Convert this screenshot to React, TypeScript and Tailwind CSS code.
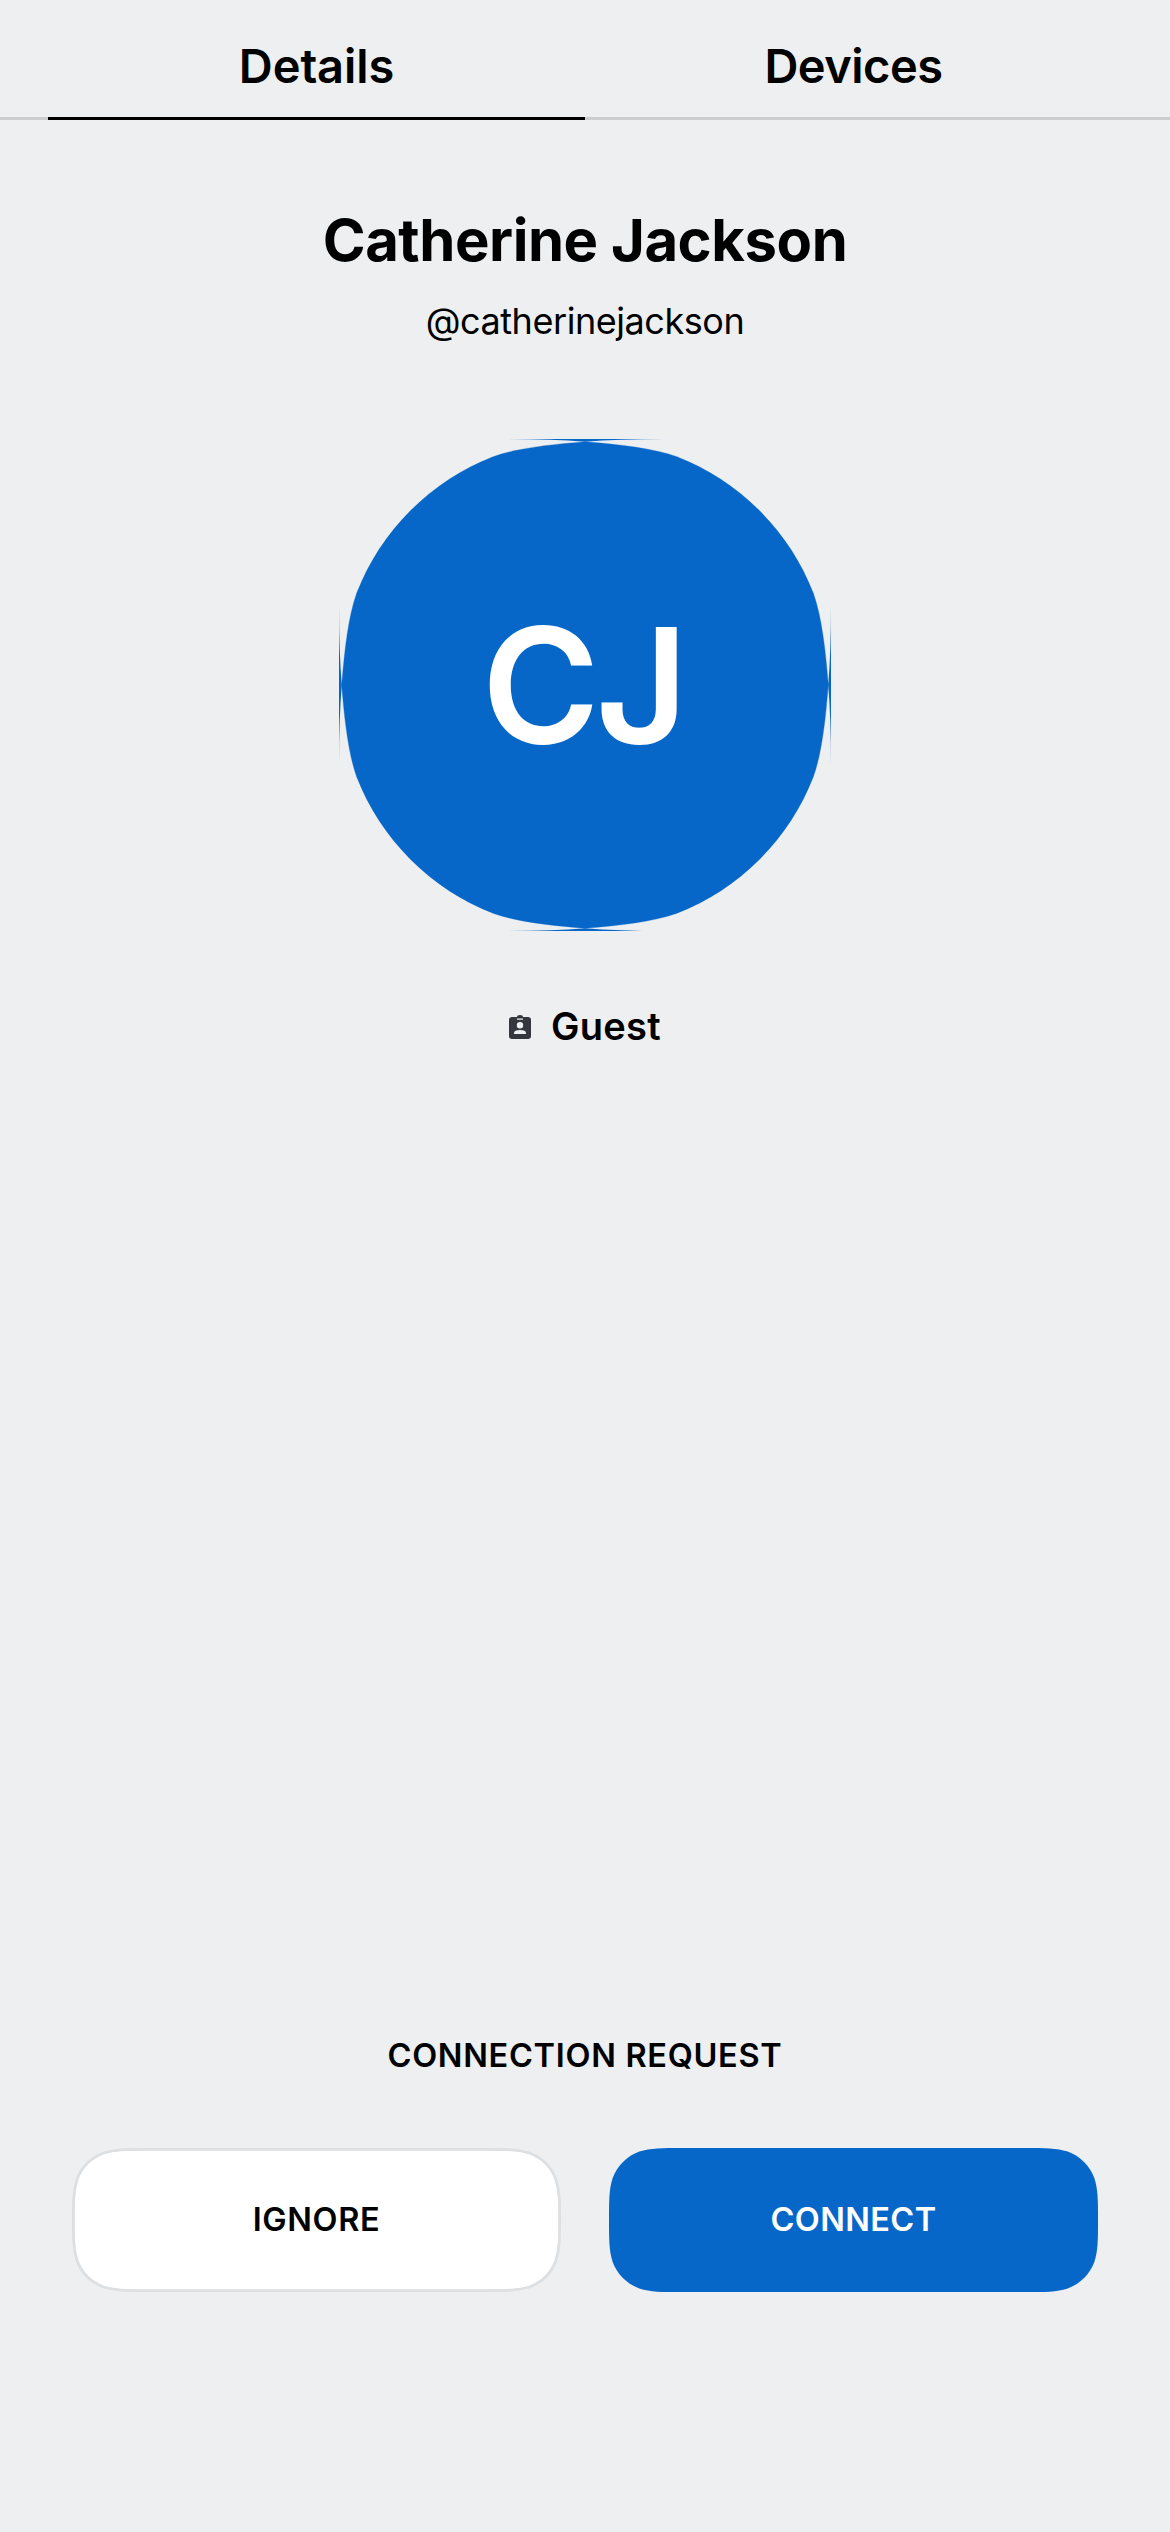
import React from "react";

const BLUE = "#0667C8";

const squircle = (w: number, h: number, r: number, i = 0) => {
  const a = r * 1.528665, b = r * 1.08849296, c = r * 0.86840694, d = r * 0.63149379;
  const e = r * 0.37282383, f = r * 0.16905956, g = r * 0.07491139;
  const k = Math.min(1, (h / 2 - i) / a);
  const a2 = a * k, b2 = Math.min(b, a2), c2 = Math.min(c, a2);
  const L = i, T = i, R = w - i, B = h - i;
  return `M${L + a} ${T}H${R - a}C${R - b} ${T} ${R - c} ${T} ${R - d} ${T + g}C${R - e} ${T + f} ${R - f} ${T + e} ${R - g} ${T + d}C${R} ${T + c2} ${R} ${T + b2} ${R} ${T + a2}V${B - a2}C${R} ${B - b2} ${R} ${B - c2} ${R - g} ${B - d}C${R - f} ${B - e} ${R - e} ${B - f} ${R - d} ${B - g}C${R - c} ${B} ${R - b} ${B} ${R - a} ${B}H${L + a}C${L + b} ${B} ${L + c} ${B} ${L + d} ${B - g}C${L + e} ${B - f} ${L + f} ${B - e} ${L + g} ${B - d}C${L} ${B - c2} ${L} ${B - b2} ${L} ${B - a2}V${T + a2}C${L} ${T + b2} ${L} ${T + c2} ${L + g} ${T + d}C${L + f} ${T + e} ${L + e} ${T + f} ${L + d} ${T + g}C${L + c} ${T} ${L + b} ${T} ${L + a} ${T}Z`;
};

function Tab({ label, active }: { label: string; active?: boolean }) {
  return (
    <button
      className={
        active
          ? "h-[120px] w-[537px] border-b-[3px] border-black pt-[13px] text-[47px] leading-[1] font-semibold tracking-[-0.1px]"
          : "h-[120px] w-[537px] border-b-[3px] border-[#cbcdce] pt-[13px] text-[47px] leading-[1] font-semibold tracking-[-0.5px]"
      }
    >
      {label}
    </button>
  );
}

function Avatar() {
  const quarter =
    "M0 -243.3C-35 -240.5 -68 -236.8 -92 -228.3A240 240 0 0 0 -228.3 -92C-236.8 -68 -240.5 -35 -243.3 0L0 0Z";
  const sliver = "M-80 -246H80Q33 -246 0 -243.2Q-33 -246 -80 -246Z";
  return (
    <div className="relative mt-[96px] grid size-[492px] place-items-center">
      <svg className="absolute inset-0" width="492" height="492" viewBox="-246 -246 492 492" fill={BLUE}>
        {[0, 90, 180, 270].map((r) => (
          <g key={r} transform={`rotate(${r})`}>
            <path d={quarter} stroke={BLUE} strokeWidth="0.3" />
            <path d={sliver} />
          </g>
        ))}
      </svg>
      <span className="relative mr-[4px] text-[160px] leading-none font-semibold tracking-[-4px] text-white">
        CJ
      </span>
    </div>
  );
}

function ActionButton({ label, primary }: { label: string; primary?: boolean }) {
  return (
    <button className="relative grid h-[144px] w-[489px] place-items-center">
      <svg className="absolute inset-0" width="489" height="144" viewBox="0 0 489 144">
        {primary ? (
          <path d={squircle(489, 144, 48)} fill={BLUE} />
        ) : (
          <path d={squircle(489, 144, 48, 1.4)} fill="white" stroke="#DCE0E3" strokeWidth="2.8" />
        )}
      </svg>
      <span
        className={
          primary
            ? "relative text-[32.5px] leading-none font-semibold tracking-[0.4px] text-white"
            : "relative text-[32.5px] leading-none font-semibold tracking-[0.6px] text-black"
        }
      >
        {label}
      </span>
    </button>
  );
}

export default function App() {
  return (
    <main className="flex h-[2532px] w-[1170px] flex-col items-center overflow-hidden bg-[#edeff1] font-['Inter',sans-serif] text-black">
      <nav className="flex h-[120px] w-full">
        <div className="w-12 border-b-[3px] border-[#cbcdce]" />
        <Tab label="Details" active />
        <Tab label="Devices" />
        <div className="w-12 border-b-[3px] border-[#cbcdce]" />
      </nav>
      <h1 className="mt-[90px] text-[58px] leading-[60px] font-bold tracking-[-0.45px] whitespace-nowrap">
        Catherine Jackson
      </h1>
      <p className="mt-[29px] text-[36px] leading-[44px] tracking-[-0.45px]">@catherinejackson</p>
      <Avatar />
      <div className="mt-[72px] flex h-[48px] items-center gap-[20px]">
        <svg width="22" height="24" viewBox="0 0 22 24">
          <path
            fill="#34373D"
            fillRule="evenodd"
            d="M3 2H8Q8 0 11 0T14 2H19Q22 2 22 5V21Q22 24 19 24H3Q0 24 0 21V5Q0 2 3 2ZM8 3.4V4.8H14V3.4ZM11 7A3.2 3.2 0 1 0 11 13.4A3.2 3.2 0 1 0 11 7ZM5 19H17V18Q17 15 11 15T5 18Z"
          />
        </svg>
        <span className="mb-[2px] text-[38px] leading-none font-semibold tracking-[0.3px]">Guest</span>
      </div>
      <p className="mt-[981px] text-[32.5px] leading-[48px] font-semibold tracking-[0.7px]">CONNECTION REQUEST</p>
      <div className="mt-[68px] flex gap-12">
        <ActionButton label="IGNORE" />
        <ActionButton label="CONNECT" primary />
      </div>
    </main>
  );
}
